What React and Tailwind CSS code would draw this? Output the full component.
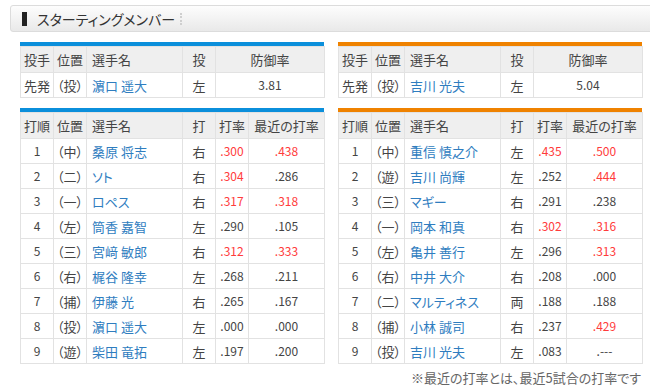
import React from "react";

const RED = "text-[#ff3b3b]";

const pitchers = {
  left: { role: "先発", pos: "投", name: "濵口 遥大", hand: "左", era: "3.81" },
  right: { role: "先発", pos: "投", name: "吉川 光夫", hand: "左", era: "5.04" },
};

const lineups = {
  left: [
    [1, "中", "桑原 将志", "右", ".300", true, ".438", true],
    [2, "二", "ソト", "右", ".304", true, ".286", false],
    [3, "一", "ロペス", "右", ".317", true, ".318", true],
    [4, "左", "筒香 嘉智", "左", ".290", false, ".105", false],
    [5, "三", "宮﨑 敏郎", "右", ".312", true, ".333", true],
    [6, "右", "梶谷 隆幸", "左", ".268", false, ".211", false],
    [7, "捕", "伊藤 光", "右", ".265", false, ".167", false],
    [8, "投", "濵口 遥大", "左", ".000", false, ".000", false],
    [9, "遊", "柴田 竜拓", "左", ".197", false, ".200", false],
  ],
  right: [
    [1, "中", "重信 慎之介", "左", ".435", true, ".500", true],
    [2, "遊", "吉川 尚輝", "左", ".252", false, ".444", true],
    [3, "三", "マギー", "右", ".291", false, ".238", false],
    [4, "一", "岡本 和真", "右", ".302", true, ".316", true],
    [5, "左", "亀井 善行", "左", ".296", false, ".313", true],
    [6, "右", "中井 大介", "右", ".208", false, ".000", false],
    [7, "二", "マルティネス", "両", ".188", false, ".188", false],
    [8, "捕", "小林 誠司", "右", ".237", false, ".429", true],
    [9, "投", "吉川 光夫", "左", ".083", false, ".---", false],
  ],
};

const th = "border border-[#e2e2e2] bg-[#efefef] font-normal h-[26px] p-0";
const td = "border border-[#e2e2e2] h-[25px] p-0";

const Cols = ({ batting }) => (
  <colgroup>
    <col className="w-[33px]" />
    <col className="w-[33px]" />
    <col className="w-[96px]" />
    <col className="w-[33px]" />
    {batting ? (
      <>
        <col className="w-[33px]" />
        <col className="w-[76px]" />
      </>
    ) : (
      <col className="w-[109px]" />
    )}
  </colgroup>
);

const PitcherTable = ({ p, bar }) => (
  <div className="w-[304px]">
    <div className={`h-[4px] ${bar}`} />
    <table className="w-full table-fixed border-collapse">
      <Cols />
      <thead>
        <tr>
          <th className={th}>投手</th>
          <th className={th}>位置</th>
          <th className={`${th} text-left pl-[5px]`}>選手名</th>
          <th className={th}>投</th>
          <th className={th}>防御率</th>
        </tr>
      </thead>
      <tbody>
        <tr>
          <td className={`${td} text-center`}>{p.role}</td>
          <td className={`${td} text-center`}>（{p.pos}）</td>
          <td className={`${td} pl-[5px] text-[#2f7dbf]`}>{p.name}</td>
          <td className={`${td} text-center`}>{p.hand}</td>
          <td className={`${td} text-center text-[12px]`}>{p.era}</td>
        </tr>
      </tbody>
    </table>
  </div>
);

const BattingTable = ({ rows, bar }) => (
  <div className="w-[304px]">
    <div className={`h-[4px] ${bar}`} />
    <table className="w-full table-fixed border-collapse">
      <Cols batting />
      <thead>
        <tr>
          <th className={th}>打順</th>
          <th className={th}>位置</th>
          <th className={`${th} text-left pl-[5px]`}>選手名</th>
          <th className={th}>打</th>
          <th className={th}>打率</th>
          <th className={th}>最近の打率</th>
        </tr>
      </thead>
      <tbody>
        {rows.map(([n, pos, name, hand, avg, avgHot, recent, recentHot]) => (
          <tr key={n}>
            <td className={`${td} text-center text-[12px]`}>{n}</td>
            <td className={`${td} text-center`}>（{pos}）</td>
            <td className={`${td} pl-[5px] text-[#2f7dbf]`}>{name}</td>
            <td className={`${td} text-center`}>{hand}</td>
            <td className={`${td} text-center text-[12px] ${avgHot ? RED : ""}`}>{avg}</td>
            <td className={`${td} text-center text-[12px] ${recentHot ? RED : ""}`}>{recent}</td>
          </tr>
        ))}
      </tbody>
    </table>
  </div>
);

export default function App() {
  return (
    <div className="w-[650px] h-[388px] overflow-hidden bg-white text-[#444] text-[13px] leading-none font-['Noto_Sans_CJK_JP','Noto_Sans',sans-serif] [font-feature-settings:'palt']">
      <div className="mt-[5px] ml-[10px] w-[660px] h-[27px] flex items-center border border-[#dcdcdc] rounded-[3px] bg-gradient-to-b from-[#fdfdfd] to-[#e9e9e9]">
        <div className="ml-[11px] w-[5px] h-[14px] bg-[#222]" />
        <div className="ml-[10px] text-[14px] text-[#333]">スターティングメンバー</div>
        <div className="ml-[5px] h-[12px] border-l-2 border-dotted border-[#cfcfcf]" />
      </div>

      <div className="mt-[10px] ml-[20px] flex gap-[14px]">
        <PitcherTable p={pitchers.left} bar="bg-[#0b8fdb]" />
        <PitcherTable p={pitchers.right} bar="bg-[#ef8200]" />
      </div>

      <div className="mt-[10px] ml-[20px] flex gap-[14px]">
        <BattingTable rows={lineups.left} bar="bg-[#0b8fdb]" />
        <BattingTable rows={lineups.right} bar="bg-[#ef8200]" />
      </div>

      <div className="mt-[7px] w-[641px] text-right text-[13px] text-[#666]">
        ※最近の打率とは、最近5試合の打率です
      </div>
    </div>
  );
}
